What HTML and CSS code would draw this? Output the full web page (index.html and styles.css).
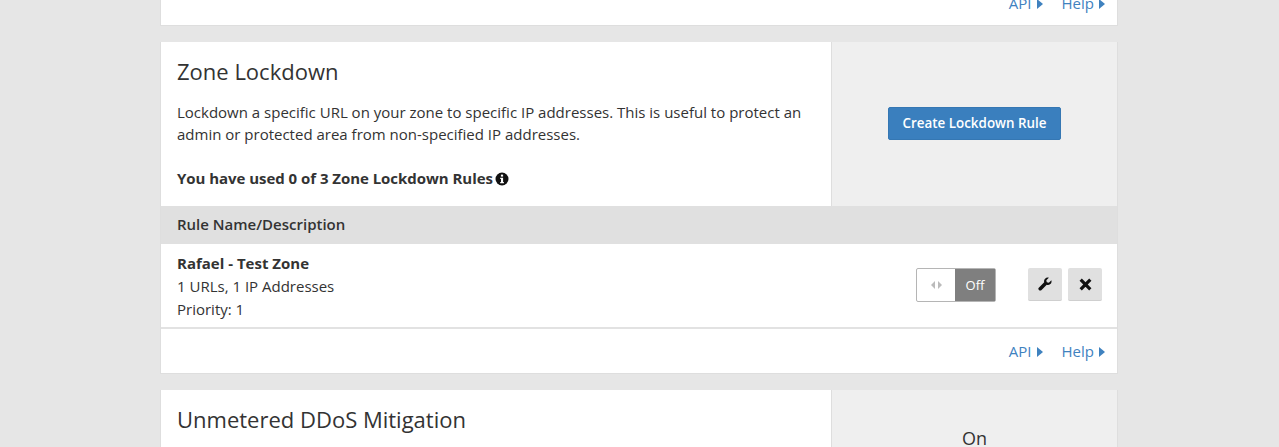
FILE: index.html
```html
<!DOCTYPE html>
<html lang="en">

<head>
    <meta charset="UTF-8">
    <title>Zone Lockdown</title>
    <link rel="stylesheet" href="styles.css">
</head>

<body>
    <div class="page">
        <div class="card">
            <div class="card-foot">
                <a href="#" class="foot-link">API<span class="caret"></span></a>
                <a href="#" class="foot-link">Help<span class="caret"></span></a>
            </div>
        </div>

        <div class="card">
            <div class="card-top">
                <div class="card-main">
                    <h2>Zone Lockdown</h2>
                    <p>Lockdown a specific URL on your zone to specific IP addresses. This is useful to protect an admin or protected area from non-specified IP addresses.</p>
                    <p class="used">You have used 0 of 3 Zone Lockdown Rules
                        <svg class="info" viewBox="0 0 14 14" width="14" height="14">
                            <circle cx="7" cy="7" r="6.5" fill="#111"></circle>
                            <rect x="5.9" y="2.6" width="2.2" height="2" fill="#fff"></rect>
                            <path d="M5.2 5.8h2.9v4.200h.8v1.200H5.200V10h.8V7h-.8z" fill="#fff"></path>
                        </svg>
                    </p>
                </div>
                <div class="card-side">
                    <button class="btn">Create Lockdown Rule</button>
                </div>
            </div>
            <div class="table-head">Rule Name/Description</div>
            <div class="rule">
                <div class="rule-info">
                    <strong>Rafael - Test Zone</strong>
                    <span>1 URLs, 1 IP Addresses</span>
                    <span>Priority: 1</span>
                </div>
                <div class="toggle">
                    <div class="toggle-handle">
                        <span class="arrow-left"></span>
                        <span class="arrow-right"></span>
                    </div>
                    <div class="toggle-off">Off</div>
                </div>
                <div class="rule-actions">
                    <button class="icon-btn">
                        <svg viewBox="0 0 16 16" width="14" height="14">
                            <path d="M15.300 3.600c.5 1.700 0 3.400-1.200 4.500-1.200 1-2.700 1.300-4.100.8L3.800 15c-.7.700-1.800.7-2.500 0l-.4-.4c-.7-.7-.7-1.700 0-2.400L7.100 6C6.600 4.600 7 3 8.100 1.900 9.200.8 10.900.4 12.400.9L9.500 3.700l.5 2.400 2.400.5z" fill="#111"></path>
                        </svg>
                    </button>
                    <button class="icon-btn">
                        <svg viewBox="0 0 14 14" width="15" height="15">
                            <path d="M2.500 2.500l9 9M11.500 2.500l-9 9" stroke="#111" stroke-width="3" fill="none"></path>
                        </svg>
                    </button>
                </div>
            </div>
            <div class="card-foot">
                <a href="#" class="foot-link">API<span class="caret"></span></a>
                <a href="#" class="foot-link">Help<span class="caret"></span></a>
            </div>
        </div>

        <div class="card">
            <div class="card-top">
                <div class="card-main">
                    <h2>Unmetered DDoS Mitigation</h2>
                </div>
                <div class="card-side card-side-status">On</div>
            </div>
        </div>
    </div>
</body>

</html>
```

FILE: styles.css
```css
* {
    margin: 0;
    padding: 0;
    box-sizing: border-box;
}

html,
body {
    height: 100%;
    overflow: hidden;
}

body {
    background: #e6e6e6;
    font-family: "Open Sans", "Liberation Sans", sans-serif;
    font-size: 15px;
    line-height: 22px;
    color: #333;
}

.page {
    width: 958px;
    margin-left: 160px;
    margin-top: -19px;
}

.card {
    background: #fff;
    border: 1px solid #dedede;
    border-top: 0;
    margin-bottom: 16px;
}

.card-top {
    display: flex;
    height: 164px;
}

.card-main {
    width: 670px;
    padding: 14px 16px 0;
}

h2 {
    font-size: 22px;
    font-weight: 400;
    line-height: 30px;
    margin-bottom: 15px;
}

.used {
    margin-top: 22px;
    font-weight: 700;
    letter-spacing: -0.04px;
}

.info {
    margin-left: -2px;
    vertical-align: -2px;
}

.card-side {
    flex: 1;
    display: flex;
    align-items: center;
    justify-content: center;
    background: #efefef;
    border-left: 1px solid #dedede;
}

.card-side-status {
    align-items: flex-start;
    padding-top: 37px;
    font-size: 18px;
}

.btn {
    width: 173px;
    height: 33px;
    margin-bottom: 2px;
    background: #3a7fbe;
    border: 1px solid #3577b3;
    border-radius: 2px;
    color: #fff;
    font-family: inherit;
    font-size: 13.4px;
    font-weight: 600;
}

.table-head {
    height: 38px;
    line-height: 37px;
    padding-left: 16px;
    background: #e0e0e0;
    font-weight: 600;
}

.rule {
    display: flex;
    align-items: center;
    height: 85px;
    padding: 0 15px 0 16px;
    border-bottom: 2px solid #e2e2e2;
}

.rule-info {
    flex: 1;
    display: flex;
    flex-direction: column;
    padding-top: 2px;
    line-height: 23px;
}

.toggle {
    display: flex;
    width: 80px;
    height: 34px;
    border: 1px solid #b5b5b5;
    border-radius: 2px;
    margin-right: 32px;
    margin-bottom: 2px;
}

.toggle-handle {
    width: 38px;
    display: flex;
    align-items: center;
    justify-content: center;
    gap: 3px;
}

.arrow-left {
    border: 4px solid transparent;
    border-left: 0;
    border-right: 4px solid #bbb;
}

.arrow-right {
    border: 4px solid transparent;
    border-right: 0;
    border-left: 4px solid #bbb;
}

.toggle-off {
    flex: 1;
    background: #7f7f7f;
    color: #fff;
    font-size: 13px;
    line-height: 33px;
    text-align: center;
}

.rule-actions {
    display: flex;
    gap: 6px;
    margin-bottom: 2px;
}

.icon-btn {
    display: flex;
    align-items: center;
    justify-content: center;
    width: 34px;
    height: 33px;
    background: #e0e0e0;
    border: 0;
    border-bottom: 1px solid #cfcfcf;
    border-radius: 2px;
}

.card-foot {
    display: flex;
    justify-content: flex-end;
    gap: 19px;
    height: 44px;
    padding: 11px 12px 0 0;
}

.foot-link {
    color: #3f82bf;
    text-decoration: none;
}

.caret {
    display: inline-block;
    margin-left: 5px;
    border: 5px solid transparent;
    border-right: 0;
    border-left: 6px solid #3f82bf;
}
```
